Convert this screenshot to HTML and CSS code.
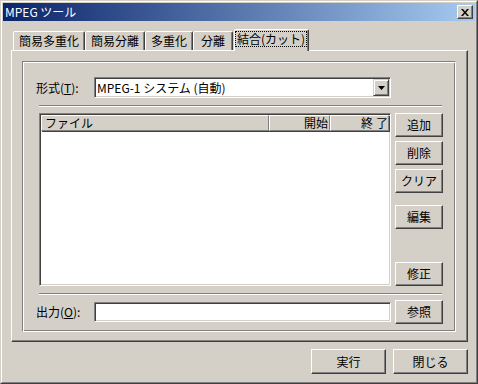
FILE: index.html
```html
<!DOCTYPE html>
<html lang="ja">
<head>
<meta charset="utf-8">
<link rel="stylesheet" href="styles.css">
</head>
<body>
<div class="window">
  <div class="frame">
    <div class="titlebar">
      <span class="title">MPEG ツール</span>
      <button class="close"><svg width="8" height="7" viewBox="0 0 8 7"><path d="M0 0h2l2 2.4L6 0h2L5 3.5 8 7H6L4 4.6 2 7H0l3-3.5z" fill="#000"/></svg></button>
    </div>
    <div class="body">
      <div class="tabs">
        <div class="tab">簡易多重化</div>
        <div class="tab">簡易分離</div>
        <div class="tab">多重化</div>
        <div class="tab narrow">分離</div>
        <div class="tab selected"><span class="focus">結合(カット)</span></div>
      </div>
      <div class="panel">
        <div class="group">
          <div class="row">
            <span class="lbl">形式(<u>T</u>):</span>
            <div class="combo">
              <span class="combo-text">MPEG-1 システム (自動)</span>
              <span class="drop"><svg width="7" height="4" viewBox="0 0 7 4"><path d="M0 0h7L3.5 4z" fill="#000"/></svg></span>
            </div>
          </div>
          <div class="sep"></div>
          <div class="middle">
            <div class="list">
              <div class="hdr">
                <div class="hc c1">ファイル</div>
                <div class="hc c2">開始</div>
                <div class="hc c3"><span class="sp">終</span>了</div>
              </div>
            </div>
            <div class="btncol">
              <button class="btn">追加</button>
              <button class="btn">削除</button>
              <button class="btn">クリア</button>
              <button class="btn gap">編集</button>
              <button class="btn last">修正</button>
            </div>
          </div>
          <div class="sep"></div>
          <div class="row out">
            <span class="lbl">出力(<u>O</u>):</span>
            <div class="field"></div>
            <button class="btn ref">参照</button>
          </div>
        </div>
      </div>
      <div class="footer">
        <button class="btn big">実行</button>
        <button class="btn big">閉じる</button>
      </div>
    </div>
  </div>
</div>
</body>
</html>
```
FILE: styles.css
```css
* { box-sizing: border-box; }
html, body { margin: 0; padding: 0; background: #d4d0c8; }
body {
  font-family: "Noto Sans CJK JP", "Noto Sans", sans-serif;
  font-size: 12px;
  line-height: 14px;
  color: #000;
}
.window {
  width: 478px;
  height: 384px;
  border: 1px solid;
  border-color: #d4d0c8 #404040 #404040 #d4d0c8;
  background: #d4d0c8;
}
.frame {
  height: 100%;
  border: 1px solid;
  border-color: #fff #808080 #808080 #fff;
  padding: 1px;
  display: flex;
  flex-direction: column;
}
.titlebar {
  height: 18px;
  flex: none;
  background: linear-gradient(to right, #0a246a, #a6caf0);
  display: flex;
  align-items: center;
  justify-content: space-between;
  padding: 0 2px;
  color: #fff;
}
.title { padding-left: 0; }
.close {
  width: 16px;
  height: 14px;
  padding: 0;
  border: 1px solid;
  border-color: #fff #404040 #404040 #fff;
  box-shadow: inset -1px -1px #808080;
  background: #d4d0c8;
  display: flex;
  align-items: center;
  justify-content: center;
}
.close svg { display: block; }
.body {
  flex: 1;
  padding: 0 7px 0 8px;
  display: flex;
  flex-direction: column;
}
.tabs {
  height: 29px;
  flex: none;
  display: flex;
  align-items: flex-end;
  padding-left: 2px;
}
.tab {
  height: 19px;
  padding: 0 5px;
  border: 1px solid;
  border-bottom: none;
  border-color: #fff #404040 transparent #fff;
  box-shadow: inset -1px 0 #808080;
  border-radius: 2px 2px 0 0;
  display: flex;
  align-items: center;
  background: #d4d0c8;
  white-space: nowrap;
}
.tab.narrow { padding: 0 7px; }
.tab.selected {
  height: 22px;
  margin: 0 -2px -1px 1px;
  padding: 0 2px 3px 1px;
  position: relative;
  z-index: 1;
}
.focus {
  outline: 1px dotted #000;
  outline-offset: 0;
  padding: 0 1px;
  line-height: 14px;
}
.panel {
  height: 292px;
  flex: none;
  border: 1px solid;
  border-color: #fff #404040 #404040 #fff;
  box-shadow: inset -1px -1px #808080;
  padding: 10px 11px 9px 10px;
  display: flex;
  flex-direction: column;
}
.group {
  flex: 1;
  border: 1px solid;
  border-color: #808080 #fff #fff #808080;
  box-shadow: inset 1px 1px #fff, inset -1px -1px #808080;
  padding: 15px 12px 7px 16px;
  display: flex;
  flex-direction: column;
}
.row {
  height: 21px;
  display: flex;
  align-items: center;
}
.lbl {
  width: 58px;
  margin-left: -3px;
  flex: none;
}
.combo, .field, .list {
  border: 1px solid;
  border-color: #808080 #fff #fff #808080;
  box-shadow: inset 1px 1px #404040, inset -1px -1px #d4d0c8;
  background: #fff;
}
.combo {
  width: 297px;
  height: 21px;
  padding: 2px;
  display: flex;
  align-items: center;
}
.combo-text { padding-left: 0; }
.drop {
  margin-left: auto;
  width: 16px;
  height: 17px;
  margin-right: -1px;
  border: 1px solid;
  border-color: #d4d0c8 #404040 #404040 #d4d0c8;
  box-shadow: inset 1px 1px #fff, inset -1px -1px #808080;
  background: #d4d0c8;
  display: flex;
  align-items: center;
  justify-content: center;
}
.drop svg { display: block; }
.sep {
  height: 2px;
  margin-top: 7px;
  margin-right: 1px;
  border-top: 1px solid #808080;
  border-bottom: 1px solid #fff;
  flex: none;
}
.middle {
  margin-top: 6px;
  height: 173px;
  flex: none;
  display: flex;
  gap: 4px;
}
.list {
  width: 352px;
  padding: 1px;
}
.hdr {
  display: flex;
  height: 16px;
}
.hc {
  height: 16px;
  background: #d4d0c8;
  border: 1px solid;
  border-color: #fff #808080 #808080 #fff;
  box-shadow: 1px 1px 0 #404040;
  line-height: 14px;
  white-space: nowrap;
}
.c1 { width: 228px; padding-left: 3px; }
.c2 { width: 61px; text-align: right; padding-right: 1px; }
.c3 { flex: 1; text-align: right; padding-right: 0; }
.sp { margin-right: 3px; }
.btncol {
  width: 48px;
  display: flex;
  flex-direction: column;
  gap: 4px;
}
.btn {
  width: 48px;
  height: 24px;
  padding: 0;
  font: inherit;
  color: #000;
  background: #d4d0c8;
  border: 1px solid;
  border-color: #fff #404040 #404040 #fff;
  box-shadow: inset -1px -1px #808080;
  flex: none;
}
.btn.gap { margin-top: 8px; }
.btn.last { margin-top: auto; }
.row.out {
  margin-top: 5px;
  height: 24px;
}
.field {
  width: 297px;
  height: 20px;
}
.btn.ref { margin-left: 4px; }
.footer {
  display: flex;
  justify-content: flex-end;
  gap: 7px;
  margin-top: 7px;
}
.btn.big {
  width: 75px;
  height: 25px;
}
```
